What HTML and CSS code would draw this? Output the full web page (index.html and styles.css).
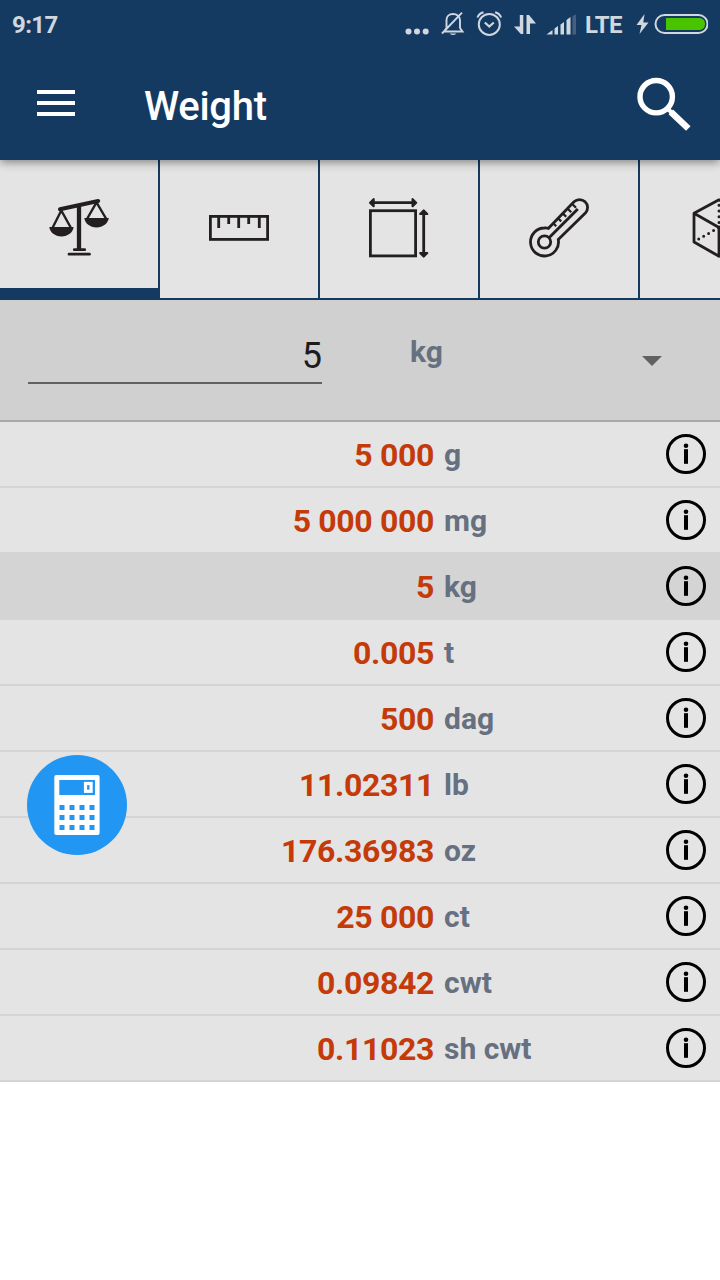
FILE: index.html
```html
<!DOCTYPE html>
<html lang="en">
<head>
  <meta charset="UTF-8">
  <meta name="viewport" content="width=device-width, initial-scale=1.0">
  <title>Weight - Unit Converter</title>
  <link rel="stylesheet" href="styles.css">
</head>
<body>

  <!-- shared info icon -->
  <svg class="sprite" width="0" height="0">
    <symbol id="info" viewBox="0 0 40 40">
      <circle cx="20" cy="20" r="18.5" fill="none" stroke="#000" stroke-width="3"/>
      <circle cx="20" cy="11.7" r="2.3"/>
      <rect x="18" y="15.2" width="4" height="14.6"/>
    </symbol>
  </svg>

  <header class="header">
    <div class="status-bar">
      <span class="time">9:17</span>
      <div class="status-icons">
        <svg width="36" height="50" viewBox="0 0 36 50">
          <g fill="#d0d7df">
            <circle cx="4.5" cy="31.5" r="3"/>
            <circle cx="13" cy="31.5" r="3"/>
            <circle cx="21.7" cy="31.5" r="3"/>
          </g>
        </svg>
        <svg width="36" height="50" viewBox="0 0 36 50">
          <path d="M4 31.5H22.5L20 28V20C20 16.5 17 14 13 14S6.5 16.5 6.5 20V28L4 31.5M2 33.5L22 12.7" fill="none" stroke="#d0d7df" stroke-width="1.9"/>
          <path d="M9.5 33.5H16.5Q13 36.5 9.5 33.5Z" fill="#d0d7df"/>
        </svg>
        <svg width="36" height="50" viewBox="0 0 36 50">
          <g fill="none" stroke="#d0d7df" stroke-width="2">
            <circle cx="13.3" cy="24.4" r="10.5"/>
            <path d="M1.5 17.5Q3 13.5 7.5 12.3M25.1 17.5Q23.6 13.5 19.1 12.3"/>
            <path d="M8.8 22.5L13.3 26.5L17.8 22.5" stroke-width="2.2"/>
          </g>
        </svg>
        <svg width="34" height="50" viewBox="0 0 34 50">
          <path d="M7.8 15H11.3V34H8.8L2 26.5H7.8ZM14.5 34V15H17L24 23.5H18V34Z" fill="#d0d7df"/>
        </svg>
        <svg width="39" height="50" viewBox="0 0 39 50">
          <path d="M.5 34.5L6.5 30V34.5ZM8.5 28.5L12 26V34.5H8.5ZM14.5 24.5L18 22V34.5H14.5ZM20.5 20L24.5 17V34.5H20.5Z" fill="#d0d7df"/>
          <path d="M26.5 16L30 14.5V34.5H26.5Z" fill="#45607e"/>
        </svg>
        <span class="network">LTE</span>
        <svg width="72" height="50" viewBox="0 0 72 50">
          <path d="M8.5 14L.5 25H5.5L3.5 34L12.5 22.5H7.3Z" fill="#d0d7df"/>
          <rect x="19.5" y="15" width="52" height="18" rx="9" fill="none" stroke="#d0d7df" stroke-width="2"/>
          <path d="M30 18H64Q69 19 69 24T64 30H30Z" fill="#4bc400"/>
        </svg>
      </div>
    </div>

    <div class="toolbar">
      <div class="menu">
        <span></span>
        <span></span>
        <span></span>
      </div>
      <h1 class="title">Weight</h1>
      <svg class="search" width="56" height="56" viewBox="0 0 56 56" fill="none" stroke="#fff">
        <circle cx="20.2" cy="19.7" r="16.2" stroke-width="5.4"/>
        <path d="M31 31L36 36" stroke-width="4"/>
        <path d="M34.8 34.8L52.3 51.5" stroke-width="6.5"/>
      </svg>
    </div>
  </header>

  <nav class="tabs">
    <div class="tab active">
      <svg width="60" height="60" viewBox="0 0 60 60" fill="none" stroke="#231f20" stroke-linecap="round">
        <path d="M11 11.3L49.2 3" stroke-width="4"/>
        <path d="M30 8V51" stroke-width="4.3" stroke-linecap="butt"/>
        <path d="M25.3 51.7H35.7M20 56.2H40.5" stroke-width="2.8"/>
        <path d="M3.7 29.5L12.3 12.5L21.7 29.5M38.3 20.5L47.5 4.5L57 20.5" stroke-width="2.4"/>
        <path d="M.3 29H24.6C24 34.5 19 38.4 12.5 38.4S1 34.5 .3 29ZM35.3 20H59.8C59 25.5 54 29.4 47.5 29.4S36 25.5 35.3 20Z" fill="#231f20" stroke="none"/>
      </svg>
    </div>
    <div class="tab">
      <svg width="60" height="60" viewBox="0 0 60 60" fill="none" stroke="#231f20" stroke-width="2.8">
        <rect x="1.4" y="18.4" width="57.2" height="23"/>
        <path d="M9.7 18V30M19.7 18V26M29.7 18V30M39.7 18V26M50.3 18V30"/>
      </svg>
    </div>
    <div class="tab">
      <svg width="60" height="60" viewBox="0 0 60 60" fill="none" stroke="#231f20" stroke-width="2.8">
        <rect x="1.4" y="12.7" width="45.2" height="45.2"/>
        <path d="M3 4.7H45M54.7 14V57"/>
        <path d="M4.6 1.2L1.1 4.7L4.600 8.2ZM43.600 1.2L47.1 4.7L43.600 8.2ZM51.2 16L54.7 12.500L58.2 16ZM51.2 55L54.7 58.500L58.2 55Z" fill="#231f20" stroke-width="2.200" stroke-linejoin="round"/>
      </svg>
    </div>
    <div class="tab">
      <svg width="60" height="60" viewBox="0 0 60 60" fill="none" stroke="#231f20" stroke-width="2.8">
        <path d="M19.5 30.3L45 3.8A8 8 0 0 1 56.6 14.8L29.3 41.5A14 14 0 1 1 15.3 30Q17.5 29.7 19.5 30.3Z"/>
        <circle cx="15.5" cy="44" r="6.2"/>
        <path d="M20.3 39.5L48.8 11" stroke-width="2.9"/>
        <path d="M43.8 6.5L47 9.7M39 11L42.2 14.2M34 15.6L37.2 18.8M29 20.2L32.2 23.4M24 25L27.2 28.2" stroke-width="2.3"/>
      </svg>
    </div>
    <div class="tab">
      <svg width="60" height="60" viewBox="0 0 60 60" fill="none" stroke="#231f20" stroke-width="2.8" stroke-linejoin="round">
        <path d="M30 1.8L5 15.3V44L30 58.3L55 44V15.3ZM5 15.3L30 29.5L55 15.3M30 29.5V58"/>
        <path d="M9.7 41L30 29.5M30 7.3V29M50.3 41L30 29.5" stroke-dasharray="0 5.7" stroke-linecap="round" stroke-width="3"/>
      </svg>
    </div>
  </nav>

  <section class="input-panel">
    <div class="amount">5</div>
    <div class="unit-select">
      <span>kg</span>
      <i class="arrow"></i>
    </div>
  </section>

  <main class="results">
    <div class="row">
      <span class="value">5 000</span>
      <span class="unit">g</span>
      <svg class="info"><use href="#info"/></svg>
    </div>
    <div class="row">
      <span class="value">5 000 000</span>
      <span class="unit">mg</span>
      <svg class="info"><use href="#info"/></svg>
    </div>
    <div class="row selected">
      <span class="value">5</span>
      <span class="unit">kg</span>
      <svg class="info"><use href="#info"/></svg>
    </div>
    <div class="row">
      <span class="value">0.005</span>
      <span class="unit">t</span>
      <svg class="info"><use href="#info"/></svg>
    </div>
    <div class="row">
      <span class="value">500</span>
      <span class="unit">dag</span>
      <svg class="info"><use href="#info"/></svg>
    </div>
    <div class="row">
      <span class="value">11.02311</span>
      <span class="unit">lb</span>
      <svg class="info"><use href="#info"/></svg>
    </div>
    <div class="row">
      <span class="value">176.36983</span>
      <span class="unit">oz</span>
      <svg class="info"><use href="#info"/></svg>
    </div>
    <div class="row">
      <span class="value">25 000</span>
      <span class="unit">ct</span>
      <svg class="info"><use href="#info"/></svg>
    </div>
    <div class="row">
      <span class="value">0.09842</span>
      <span class="unit">cwt</span>
      <svg class="info"><use href="#info"/></svg>
    </div>
    <div class="row">
      <span class="value">0.11023</span>
      <span class="unit">sh cwt</span>
      <svg class="info"><use href="#info"/></svg>
    </div>
  </main>

  <!-- floating calculator button -->
  <div class="fab">
    <svg width="100" height="100" viewBox="0 0 100 100">
      <rect x="27.3" y="20" width="45.3" height="60" rx="2" fill="#fff"/>
      <path d="M32.3 25H68V40H32.3ZM32.5 50h5v5h-5zM42.5 50h5v5h-5zM52.5 50h5v5h-5zM62.5 50h5v5h-5zM32.5 60h5v5h-5zM42.5 60h5v5h-5zM52.5 60h5v5h-5zM62.5 60h5v5h-5zM32.5 70h5v5h-5zM42.5 70h5v5h-5zM52.5 70h5v5h-5zM62.5 70h5v5h-5z" fill="#2196f3"/>
      <rect x="58.5" y="28.500" width="5.600" height="7.800" fill="#2196f3" stroke="#fff" stroke-width="3.200"/>
    </svg>
  </div>

</body>
</html>
```
FILE: styles.css
```css
* {
  box-sizing: border-box;
}

body {
  margin: 0;
  width: 720px;
  min-height: 1280px;
  font-family: Roboto, sans-serif;
  background-color: #fff;
  overflow: hidden;
}

svg {
  display: block;
  flex: none;
}

.sprite {
  position: absolute;
}

/* Header */
.header {
  position: relative;
  z-index: 2;
  height: 160px;
  background-color: #153a61;
  box-shadow: 0 2px 9px rgba(0, 0, 0, 0.45);
}

.status-bar {
  display: flex;
  justify-content: space-between;
  height: 50px;
  padding: 0 12px;
  line-height: 50px;
  font-size: 24px;
  font-weight: bold;
  letter-spacing: -0.6px;
  color: #d0d7df;
}

.status-icons {
  display: flex;
}

.network {
  width: 51px;
}

.toolbar {
  display: flex;
  height: 110px;
  padding: 0 28px 0 37px;
}

.menu {
  display: flex;
  flex-direction: column;
  gap: 7px;
  width: 38px;
  margin: 40px 69px 0 0;
}

.menu span {
  height: 4px;
  background-color: #fff;
}

.title {
  flex: 1;
  margin: 0;
  font-size: 40px;
  font-weight: 500;
  line-height: 114px;
  letter-spacing: -0.3px;
  color: #fff;
}

.search {
  margin-top: 27px;
}

/* Category tabs */
.tabs {
  display: flex;
  height: 140px;
  overflow: hidden;
  background-color: #e4e4e4;
}

.tab {
  flex: none;
  width: 160px;
  padding: 38px 0 0 49px;
  border-right: 2px solid #153a61;
  border-bottom: 2px solid #153a61;
}

.tab.active {
  border-bottom-width: 12px;
}

/* Input */
.input-panel {
  display: flex;
  height: 122px;
  padding-left: 28px;
  background-color: #d0d0d0;
  border-bottom: 2px solid #a8a8a8;
}

.amount {
  width: 294px;
  height: 84px;
  border-bottom: 2px solid #616161;
  font-size: 36px;
  line-height: 113px;
  text-align: right;
  color: #1c1c1c;
}

.unit-select {
  display: flex;
  flex: 1;
  justify-content: space-between;
  padding: 0 58px 0 88px;
  font-size: 30px;
  font-weight: bold;
  line-height: 104px;
  color: #667080;
}

.arrow {
  width: 20px;
  height: 10px;
  margin-top: 56px;
  background-color: #616161;
  clip-path: polygon(0 0, 100% 0, 50% 100%);
}

/* Results */
.row {
  display: flex;
  height: 66px;
  padding-right: 14px;
  background-color: #e4e4e4;
  border-bottom: 2px solid #d4d4d4;
  line-height: 66px;
  font-weight: bold;
}

.row.selected {
  background-color: #d4d4d4;
}

.value {
  width: 434px;
  font-size: 32px;
  letter-spacing: -0.35px;
  text-align: right;
  color: #c43a09;
}

.unit {
  flex: 1;
  padding-left: 10px;
  font-size: 30px;
  color: #667080;
}

.info {
  width: 40px;
  height: 40px;
  margin-top: 12px;
}

.fab {
  position: absolute;
  left: 27px;
  top: 755px;
  width: 100px;
  height: 100px;
  border-radius: 50%;
  background-color: #2196f3;
}
```
